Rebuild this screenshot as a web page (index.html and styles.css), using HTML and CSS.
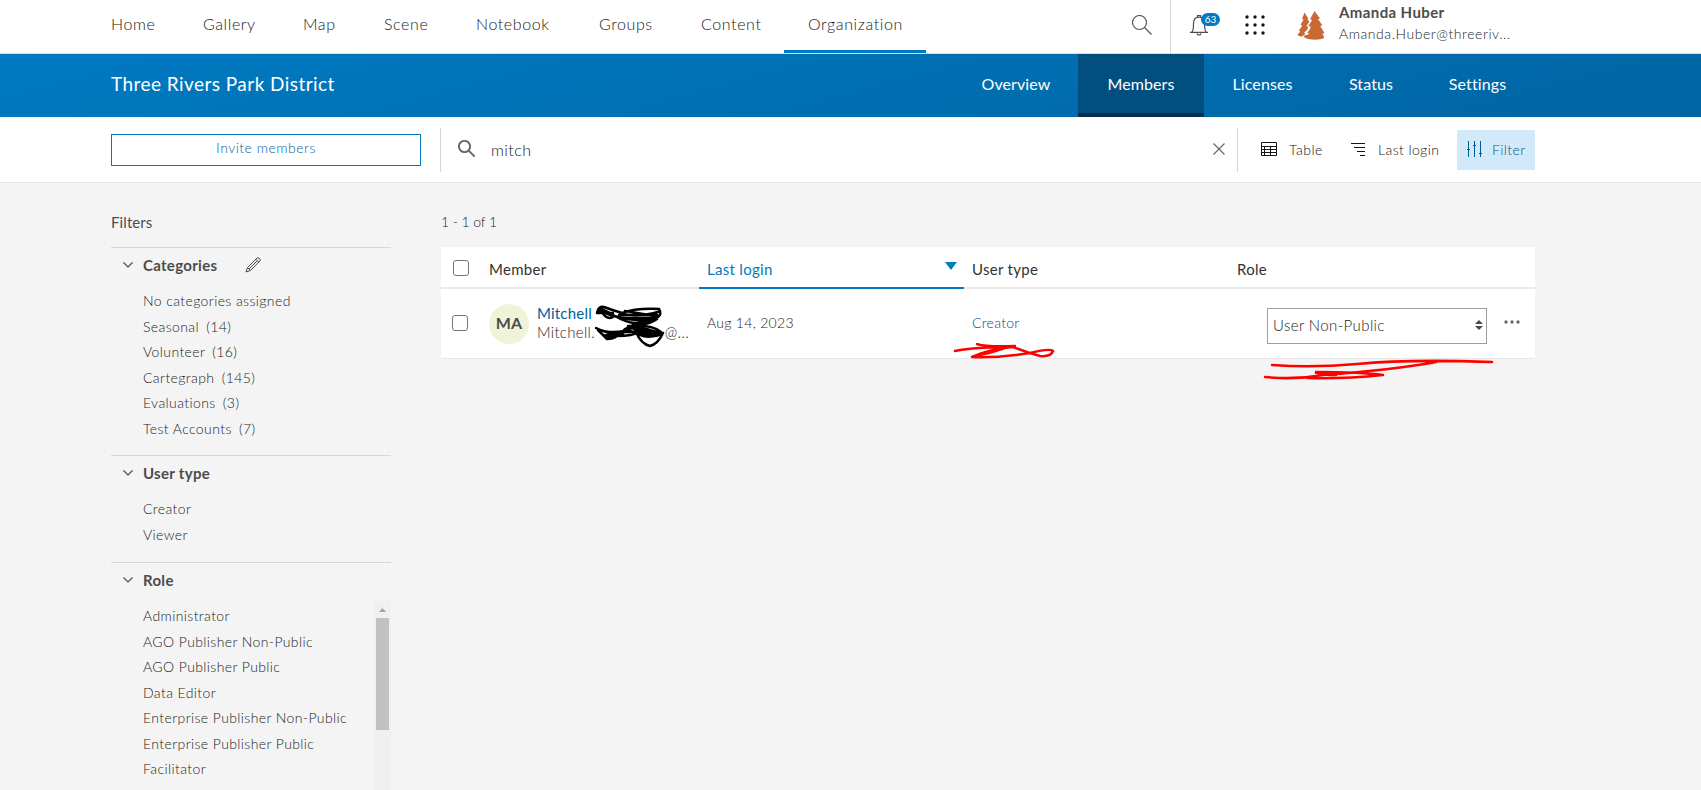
FILE: index.html
```html
<!DOCTYPE html>
<html lang="en">

<head>
	<meta charset="utf-8">
	<title>Members - Three Rivers Park District</title>
	<meta name="viewport" content="width=device-width, initial-scale=1.0">
	<link rel="stylesheet" href="styles.css">
</head>

<body>
	<header class="top">
		<nav class="top-nav">
			<a class="t-home"><span>Home</span></a>
			<a class="t-gallery"><span>Gallery</span></a>
			<a class="t-map"><span>Map</span></a>
			<a class="t-scene"><span>Scene</span></a>
			<a class="t-notebook"><span>Notebook</span></a>
			<a class="t-groups"><span>Groups</span></a>
			<a class="t-content"><span>Content</span></a>
			<a class="t-org active"><span>Organization</span></a>
		</nav>
		<div class="top-search">
			<svg width="22" height="22" viewBox="0 0 22 22" fill="none" stroke="#555" stroke-width="1.2"><circle cx="8.500" cy="7.500" r="7"/><path d="M13.500 12.500l7 7"/></svg>
		</div>
		<div class="bell">
			<svg width="20" height="22" viewBox="0 0 20 22" fill="none" stroke="#4c4c4c" stroke-width="1.2"><path d="M1 18.300h18M3 18c1.600-2 1.500-4 1.500-8.500C4.500 5.500 6.500 3.200 10 3.200s5.500 2.300 5.500 6.300c0 4.500 0 6.500 1.500 8.500M8.500 3.200V1.500h3v1.700M8 19.500c.5 2 3.500 2 4 0"/></svg>
			<span class="badge">63</span>
		</div>
		<svg class="apps" width="20" height="20" viewBox="0 0 20 20" fill="#151515"><circle cx="2" cy="2" r="1.700"/><circle cx="10" cy="2" r="1.700"/><circle cx="18" cy="2" r="1.700"/><circle cx="2" cy="10" r="1.700"/><circle cx="10" cy="10" r="1.700"/><circle cx="18" cy="10" r="1.700"/><circle cx="2" cy="18" r="1.700"/><circle cx="10" cy="18" r="1.700"/><circle cx="18" cy="18" r="1.700"/></svg>
		<svg class="logo" width="28" height="30" viewBox="0 0 28 30" fill="#c96a35"><path d="M17.500 0l5.500 7.500-2 .5 4.500 6.500-2.300.6 4.300 6.900-2.300.7c1.500 1.300 2.200 3 1.600 4.200-3 2.200-14 2.400-18.500 0-1.300-.8-1.700-1.600-1.300-2.200 2.500-.4 4.500-1.200 5-2.500l-2-.7c2-1.500 3.300-3.500 3.800-6l-2.600-.5 4-6-2.200-.7z"/><path d="M7.500 1.500l3.800 6-1 .5 2 2.800-2.800 4.200 1.800 1.200c-.8 2.800-2.300 4-4.300 5l1.500 1.200c-1.500 1.200-2.500 3-4.500 3-2 0-3.300-.8-3.500-1.600l2.800-3.300-1.600-.7 3.700-5.300-2-.5 3.200-5.500-1.600-.5z"/></svg>
		<div class="user">
			<div class="user-name">Amanda Huber</div>
			<div class="user-mail">Amanda.Huber@threeriv...</div>
		</div>
	</header>

	<div class="org-bar">
		<h1><span>Three Rivers Park District</span></h1>
		<nav class="org-nav">
			<a class="o-overview"><span>Overview</span></a>
			<a class="o-members active"><span>Members</span></a>
			<a class="o-licenses"><span>Licenses</span></a>
			<a class="o-status"><span>Status</span></a>
			<a class="o-settings"><span>Settings</span></a>
		</nav>
	</div>

	<div class="tools">
		<button class="invite" type="button">Invite members</button>
		<div class="search">
			<svg width="18" height="18" viewBox="0 0 18 18" fill="none" stroke="#666" stroke-width="1.900"><circle cx="6.500" cy="6.500" r="5.600"/><path d="M10.700 10.700l6 6"/></svg>
			<span class="query">mitch</span>
			<svg class="clear" width="12" height="12" viewBox="0 0 12 12" fill="none" stroke="#666" stroke-width="1.200"><path d="M.5.5l11 11M11.500.5l-11 11"/></svg>
		</div>
		<div class="view-table">
			<svg width="16" height="14" viewBox="0 0 16 14" fill="none" stroke="#151515"><path d="M.5.5h15v13H.5zM0 4.500h16M0 7.500h16M0 10.500h16M3.500 4.500v9M9.500 4.500v9"/></svg>
			<span>Table</span>
		</div>
		<div class="view-sort">
			<svg width="14" height="13" viewBox="0 0 14 13" fill="none" stroke="#151515"><path d="M0 .5h14M3 4.500h11M6 8.500h8M9 12.500h5"/></svg>
			<span>Last login</span>
		</div>
		<div class="view-filter">
			<svg width="15" height="16" viewBox="0 0 15 16" fill="none" stroke="#005e95"><path d="M1.500 0v16M7.500 0v16M13.500 0v16M0 8.500h3M6 4.500h3M12 12.500h3"/></svg>
			<span>Filter</span>
		</div>
	</div>

	<main>
		<aside>
			<h2>Filters</h2>
			<section class="group categories">
				<h3><svg width="10" height="6" viewBox="0 0 10 6" fill="none" stroke="#4c4c4c" stroke-width="1.200"><path d="M.5.5L5 5 9.500.5"/></svg><span>Categories</span>
					<svg class="pencil" width="16" height="16" viewBox="0 0 16 16" fill="none" stroke="#4c4c4c"><path d="M1 15l1.500-4.500L12 1.200q1-.8 2 0l.8.8q.8 1 0 2L5.500 13.500zM11 2.300l2.800 2.800M2.500 10.500l3 3M4 12l8-8"/></svg>
				</h3>
				<ul>
					<li>No categories assigned</li>
					<li>Seasonal <span class="count">(14)</span></li>
					<li>Volunteer <span class="count">(16)</span></li>
					<li>Cartegraph <span class="count">(145)</span></li>
					<li>Evaluations <span class="count">(3)</span></li>
					<li>Test Accounts <span class="count">(7)</span></li>
				</ul>
			</section>
			<section class="group types">
				<h3><svg width="10" height="6" viewBox="0 0 10 6" fill="none" stroke="#4c4c4c" stroke-width="1.200"><path d="M.5.5L5 5 9.500.5"/></svg><span>User type</span></h3>
				<ul>
					<li>Creator</li>
					<li>Viewer</li>
				</ul>
			</section>
			<section class="group roles">
				<h3><svg width="10" height="6" viewBox="0 0 10 6" fill="none" stroke="#4c4c4c" stroke-width="1.200"><path d="M.5.5L5 5 9.500.5"/></svg><span>Role</span></h3>
				<div class="role-scroll">
					<ul>
						<li>Administrator</li>
						<li>AGO Publisher Non-Public</li>
						<li>AGO Publisher Public</li>
						<li>Data Editor</li>
						<li>Enterprise Publisher Non-Public</li>
						<li>Enterprise Publisher Public</li>
						<li>Facilitator</li>
						<li>Publisher</li>
					</ul>
					<div class="scrollbar">
						<svg width="7" height="4" viewBox="0 0 7 4" fill="#a3a3a3"><path d="M3.500 0L7 4H0z"/></svg>
						<div class="thumb"></div>
					</div>
				</div>
			</section>
		</aside>

		<div class="results">
			<p class="total">1 - 1 of 1</p>
			<div class="grid">
				<div class="row head">
					<div class="check"><i class="box"></i></div>
					<div class="c-member">Member</div>
					<div class="c-login sorted">Last login<svg width="12" height="8" viewBox="0 0 12 8" fill="#007ac2"><path d="M0 0h12L6 8z"/></svg></div>
					<div class="c-type">User type</div>
					<div class="c-role">Role</div>
				</div>
				<div class="row member">
					<div class="check"><i class="box"></i></div>
					<div class="c-member">
						<div class="avatar">MA</div>
						<div class="who">
							<a class="name">Mitchell</a>
							<div class="mail"><span>Mitchell.</span><span>@...</span></div>
							<!-- black pen over the surname -->
							<svg class="pen black" width="70" height="44" viewBox="0 0 70 44"><path d="M2 9Q3 2 9 3q8 3 18 6Q40 4 64 5q3 5-1 8-10 3-20 3-14-1-24-4-4 4-9 0L4 5M3 6l15 6M5 4l12 6M3 9h15M25 9q15 5 38-1M24 11h38M28 14h32M18 11q14 8 22 8 16-1 22-6M30 7l30 5"/><path d="M1 24q12 6 28 3 14-8 38 4M3 25q14 7 26 2M8 31q10 4 24-5M3 26l9 9 10-7M12 35q6 0 10-3 16 0 22-4M29 26q8-6 18-6 8 0 15-5M30 25q18 8 36 4M33 22q18 10 31 9M38 22l28 7M66 28q-10-8-32-6M41 28q5 12 14 14 8-2 13-13M40 26q6 10 24 5M11 28h24M12 31h16M42 28l22 2M46 24l16 8M15 33l18-6M38 21q6 7 15 6"/></svg>
						</div>
					</div>
					<div class="c-login">Aug 14, 2023</div>
					<div class="c-type"><a>Creator</a>
						<svg class="pen red type-mark" width="102" height="18" viewBox="0 0 102 18"><path d="M2 8q20-4 58-4M24 1q8 3 38 2M60 4q-24 2-41 10 25 1 58-4 20-5 23-2-2 6-13 5Q72 9 60 4M22 13q16-3 30-8"/></svg>
					</div>
					<div class="c-role">
						<div class="select"><span>User Non-Public</span><svg width="8" height="10" viewBox="0 0 8 10" fill="#4c4c4c"><path d="M4 0l4 4H0zM4 10L0 6h8z"/></svg></div>
						<svg class="more" width="16" height="4" viewBox="0 0 16 4" fill="#6a6a6a"><circle cx="2" cy="2" r="1.700"/><circle cx="8" cy="2" r="1.700"/><circle cx="14" cy="2" r="1.700"/></svg>
						<svg class="pen red role-mark" width="232" height="22" viewBox="0 0 232 22"><path d="M9 6q40 3 85-1Q145 0 229 3M2 18q30 3 58-2 70-5 113-13M53 13q45 0 67 3-40 4-75 3M53 14q8 2 20 2"/></svg>
					</div>
				</div>
			</div>
		</div>
	</main>
</body>

</html>
```

FILE: styles.css
```css
* {
	box-sizing: border-box;
}

body {
	margin: 0;
	height: 790px;
	overflow: hidden;
	background: #f4f4f4;
	color: #4c4c4c;
	font-family: Lato, "Open Sans", sans-serif;
	font-size: 15px;
}

h1, h2, h3, p, ul {
	margin: 0;
	padding: 0;
	font-weight: 400;
}

ul {
	list-style: none;
}

svg {
	display: block;
	flex: none;
}

/* light text */
.top-nav, .user-mail, .invite, .query, .view-table, .view-sort,
.view-filter, .group ul, .total, .member {
	font-weight: 300;
}

/* top bar */
.top {
	display: flex;
	height: 54px;
	padding-left: 82px;
	background: #fff;
	border-bottom: 1px solid #dcdcdc;
}

.top-nav {
	display: flex;
	width: 1047px;
	font-size: 16px;
	letter-spacing: .6px;
	color: #202020;
}

.top-nav a {
	padding: 0 0 6px 29px;
	display: flex;
	align-items: center;
	white-space: nowrap;
}

.t-home { width: 92px; }
.t-gallery { width: 100px; }
.t-map { width: 81px; }
.t-scene { width: 92px; }
.t-notebook { width: 123px; }
.t-groups { width: 102px; }
.t-content { width: 112px; }
.t-org { width: 142px; }

.top-nav .active {
	padding: 3px 0 6px 24px;
	border-bottom: 3px solid #007ac2;
}

.top-search {
	width: 42px;
	padding: 15px 0 0 2px;
	border-right: 1px solid #d5d5d5;
}

.bell {
	position: relative;
	width: 74px;
	padding: 14px 0 0 18px;
}

.badge {
	position: absolute;
	left: 30px;
	top: 13px;
	width: 19px;
	height: 13px;
	border-radius: 7px;
	background: #007ac2;
	color: #fff;
	font-size: 10px;
	line-height: 13px;
	text-align: center;
}

.apps {
	margin-top: 15px;
}

.logo {
	margin: 11px 14px 0 32px;
}

.user-name {
	margin-top: 3px;
	font-size: 15px;
	font-weight: 700;
	line-height: 18px;
	letter-spacing: .4px;
}

.user-mail {
	margin-top: 4px;
	font-size: 14px;
	line-height: 18px;
	letter-spacing: .55px;
	color: #262626;
}

/* organization bar */
.org-bar {
	display: flex;
	justify-content: space-between;
	height: 63px;
	padding: 0 167px 0 111px;
	background: linear-gradient(165deg, #007ac2, #0065a3);
	color: #fff;
}

.org-bar h1 {
	padding-top: 18px;
	font-size: 19px;
	line-height: 24px;
	letter-spacing: .45px;
}

.org-nav {
	display: flex;
	font-size: 16px;
	letter-spacing: .1px;
}

.org-nav a {
	display: flex;
	align-items: center;
	justify-content: center;
	padding-bottom: 4px;
}

.o-overview { width: 124px; }
.o-members { width: 126px; }
.o-licenses { width: 117px; }
.o-status { width: 100px; }
.o-settings { width: 113px; }

.org-nav .active {
	padding: 4px 0;
	background: #004f7f;
	border-bottom: 4px solid #00304d;
}

/* search and view tools */
.tools {
	display: flex;
	align-items: center;
	height: 66px;
	padding: 1px 0 0 111px;
	background: #fff;
	border-bottom: 1px solid #e2e2e2;
}

.invite {
	width: 310px;
	height: 32px;
	margin-right: 19px;
	padding: 0 0 5px;
	border: 1px solid #007ac2;
	background: #fff;
	color: #0061a8;
	font-family: Lato, sans-serif;
	font-size: 14px;
	letter-spacing: .5px;
}

.search {
	display: flex;
	align-items: center;
	width: 798px;
	height: 44px;
	padding: 0 12px 2px 17px;
	border: solid #d5d5d5;
	border-width: 0 1px;
}

.query {
	margin: 0 0 0 15px;
	font-size: 16px;
	letter-spacing: .45px;
	color: #151515;
}

.clear {
	margin-left: auto;
}

.view-table, .view-sort, .view-filter {
	display: flex;
	align-items: center;
	height: 40px;
	padding-bottom: 2px;
	font-size: 14px;
	white-space: nowrap;
	color: #151515;
}

.view-table {
	width: 113px;
	padding-left: 23px;
	gap: 12px;
	letter-spacing: .5px;
}

.view-sort {
	width: 106px;
	gap: 13px;
	letter-spacing: .4px;
}

.view-filter {
	width: 78px;
	padding-left: 10px;
	gap: 10px;
	background: #d2e9f9;
	color: #00548c;
	letter-spacing: .4px;
}

main {
	display: flex;
	padding-left: 111px;
}

/* filters */
aside {
	width: 280px;
	margin-right: 50px;
}

h2 {
	height: 64px;
	padding-top: 29px;
	font-size: 15px;
	line-height: 20px;
	letter-spacing: .1px;
}

.group {
	border-top: 1px solid #d8d8d8;
}

.categories { height: 208px; }
.types { height: 107px; }

h3 {
	display: flex;
	align-items: center;
	height: 36px;
	padding: 0 0 2px 12px;
	font-size: 15px;
	font-weight: 700;
	letter-spacing: .3px;
}

h3 span {
	margin-left: 10px;
}

.pencil {
	margin-left: 28px;
}

.group ul {
	padding: 4px 0 0 32px;
	font-size: 14px;
	line-height: 25.500px;
	letter-spacing: .4px;
	color: #1c1c1c;
	white-space: nowrap;
}

.count {
	margin-left: 3px;
}

.role-scroll {
	display: flex;
	justify-content: space-between;
	height: 200px;
	margin-top: 2px;
	overflow: hidden;
}

.roles .role-scroll ul {
	padding-top: 2px;
}

.scrollbar {
	width: 17px;
	padding: 7px 2px 0;
	background: #f0f0f0;
}

.scrollbar svg {
	margin: 0 auto 6px;
}

.thumb {
	height: 112px;
	background: #c1c1c1;
}

/* member list */
.results {
	width: 1094px;
}

.total {
	height: 64px;
	padding-top: 29px;
	font-size: 14px;
	line-height: 20px;
	letter-spacing: -.1px;
	color: #1c1c1c;
}

.grid {
	background: #fff;
	border-bottom: 1px solid #e8e8e8;
}

.row {
	display: grid;
	grid-template-columns: 48px 210px 265px 265px 306px;
}

.head {
	grid-template-rows: 42px;
	font-size: 15px;
	line-height: 45px;
	color: #323232;
	letter-spacing: .3px;
}

.row > div {
	border-bottom: 2px solid #eaeaea;
}

.row.member > div {
	border: 0;
}

.check {
	padding: 13px 0 0 12px;
}

.box {
	display: block;
	width: 16px;
	height: 16px;
	border: 1px solid #767676;
	border-radius: 3px;
	background: #fff;
}

.c-login, .c-type, .head .c-role {
	padding-left: 8px;
}

.head .sorted {
	display: flex;
	justify-content: space-between;
	padding-right: 7px;
	color: #007ac2;
	border-color: #007ac2;
}

.sorted svg {
	margin-top: 15px;
}

.member {
	grid-template-rows: 69px;
	font-size: 14px;
	line-height: 67px;
	letter-spacing: .3px;
	color: #1c1c1c;
}

.member .check {
	padding: 26px 0 0 11px;
}

.member .c-member {
	display: flex;
	padding-top: 15px;
}

.avatar {
	width: 40px;
	height: 40px;
	border-radius: 50%;
	background: #eff4d9;
	color: #4c4c4c;
	font-size: 16px;
	font-weight: 700;
	line-height: 38px;
	letter-spacing: .2px;
	text-align: center;
}

.who {
	position: relative;
	width: 154px;
	margin-left: 8px;
	line-height: 19px;
}

.name {
	display: block;
	color: #00619b;
	font-size: 15px;
	font-weight: 400;
	letter-spacing: .2px;
}

.mail {
	display: flex;
	justify-content: space-between;
	width: 152px;
	font-size: 15px;
}

.pen {
	position: absolute;
	fill: none;
	stroke-width: 2.500;
	stroke-linecap: round;
	stroke-linejoin: round;
}

.black {
	left: 58px;
	top: 0;
	stroke: #000;
}

.red {
	stroke: #f00;
}

.member .c-type, .member .c-role {
	position: relative;
}

.c-type a {
	color: #00488a;
}

.type-mark {
	left: -11px;
	top: 54px;
}

.role-mark {
	left: 34px;
	top: 70px;
}

.member .c-role {
	display: flex;
	padding: 19px 0 0 38px;
}

.select {
	display: flex;
	align-items: center;
	justify-content: space-between;
	width: 220px;
	height: 36px;
	padding: 0 3px 2px 5px;
	border: 1px solid #9d9d9d;
	font-size: 15px;
	line-height: 32px;
	letter-spacing: .4px;
}

.more {
	margin: 12px 0 0 17px;
}
```
